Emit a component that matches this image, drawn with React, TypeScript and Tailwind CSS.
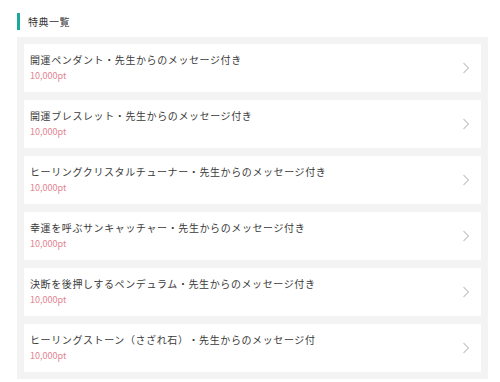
const items = [
  "開運ペンダント・先生からのメッセージ付き",
  "開運ブレスレット・先生からのメッセージ付き",
  "ヒーリングクリスタルチューナー・先生からのメッセージ付き",
  "幸運を呼ぶサンキャッチャー・先生からのメッセージ付き",
  "決断を後押しするペンデュラム・先生からのメッセージ付き",
  "ヒーリングストーン（さざれ石）・先生からのメッセージ付",
];

function Chevron() {
  return (
    <svg width="8" height="12" viewBox="0 0 8 12" fill="none">
      <path d="M1.5 1 L6.5 6 L1.5 11" stroke="#cccccc" strokeWidth="1.3" />
    </svg>
  );
}

export default function App() {
  return (
    <div
      className="w-[500px] h-[382px] bg-white pl-[17px] pr-[12px] pt-[13px]"
      style={{ fontFamily: '"Noto Sans CJK JP", "Noto Sans", sans-serif' }}
    >
      {/* heading */}
      <div className="flex items-center h-[17px] border-l-[3px] border-[#1aa99a] pl-[8px]">
        <h2 className="text-[10px] tracking-[0.05em] text-[#333]">特典一覧</h2>
      </div>
      <ul className="mt-[7px] bg-[#f3f3f3] p-[7px] flex flex-col gap-[8px]">
        {items.map((name) => (
          <li
            key={name}
            className="h-[48px] bg-white flex items-center justify-between pl-[6px] pr-[11px]"
          >
            <div className="flex flex-col -mt-[1px]">
              <span className="text-[10px] leading-[16px] tracking-[0.6px] text-[#3a3a3a] [text-spacing-trim:space-all]">
                {name}
              </span>
              <span className="text-[9px] leading-[16px] text-[#e3848f]">
                10,000pt
              </span>
            </div>
            <Chevron />
          </li>
        ))}
      </ul>
    </div>
  );
}
